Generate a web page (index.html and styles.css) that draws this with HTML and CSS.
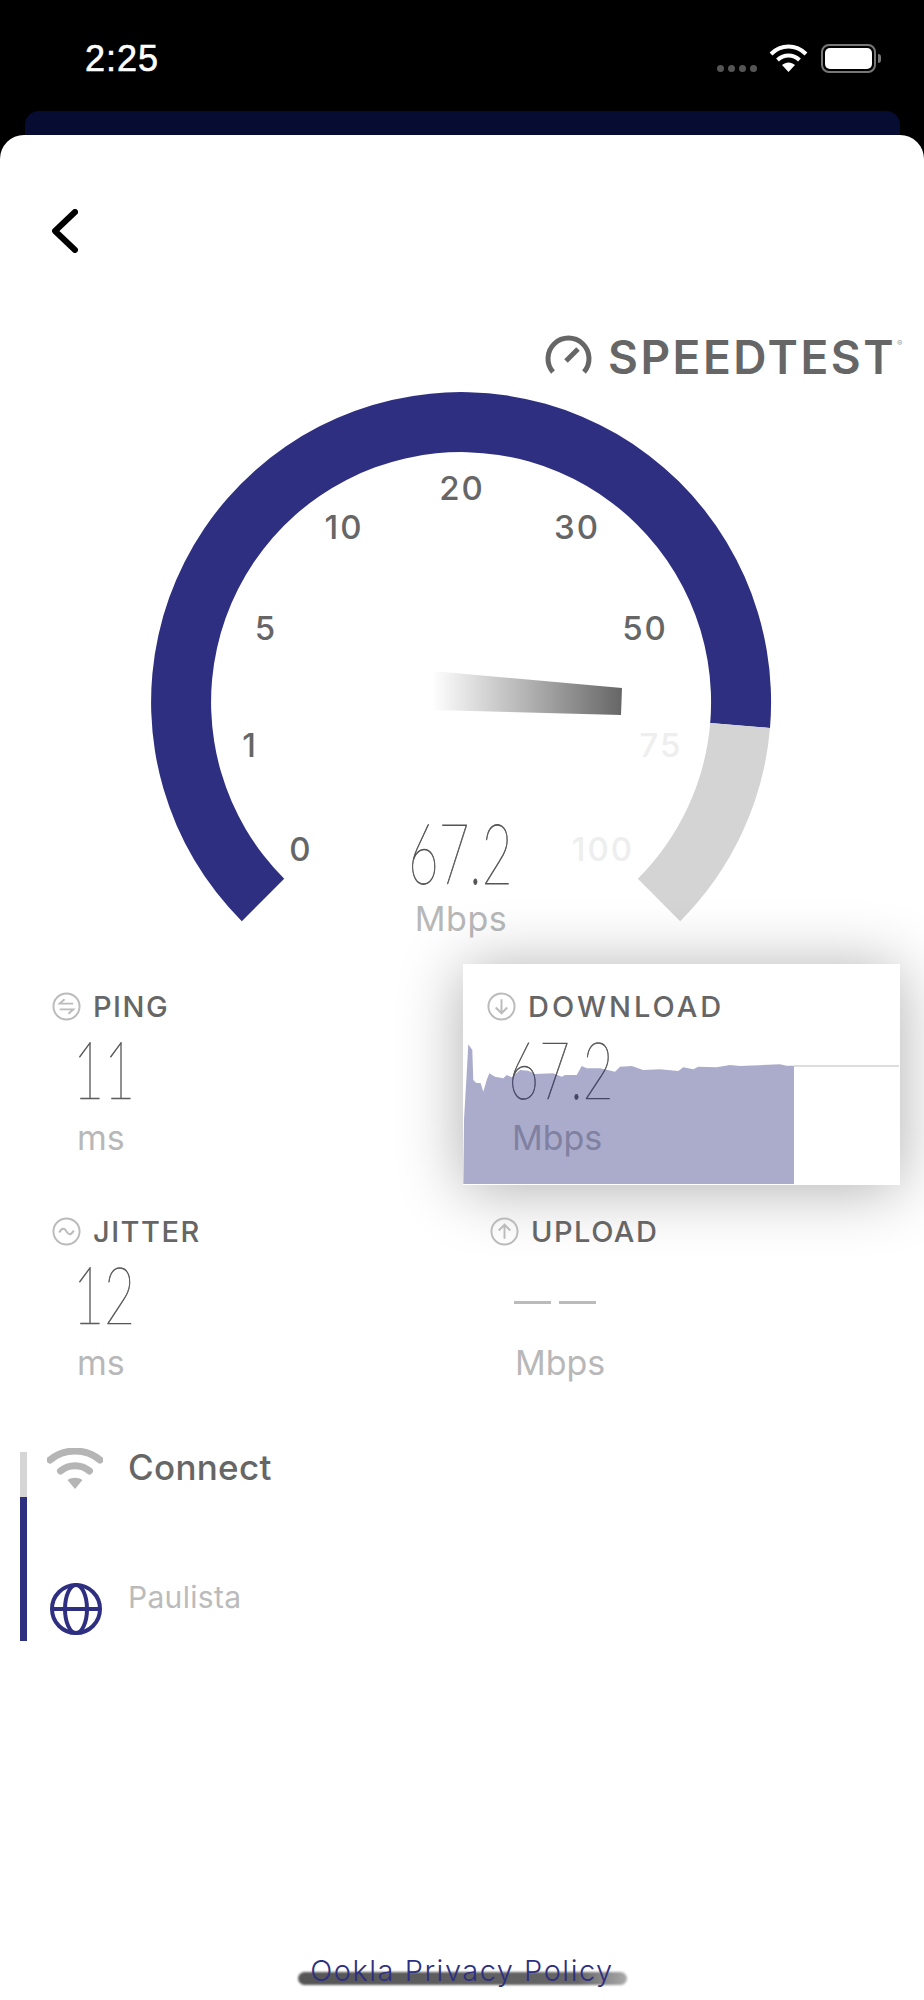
FILE: index.html
```html
<!DOCTYPE html>
<html lang="en">
<head>
  <meta charset="UTF-8">
  <meta name="viewport" content="width=device-width, initial-scale=1.0">
  <title>Speedtest</title>
  <link rel="stylesheet" href="styles.css">
</head>
<body>
  <div class="status-bar">
    <span class="clock">2:25</span>
    <div class="status-icons">
      <div class="signal"><i></i><i></i><i></i><i></i></div>
      <svg class="status-wifi" viewBox="0 0 39 28">
        <path d="M2 10 C12 0 27 0 37 10" />
        <path d="M8.500 16 C15 10 24 10 30.500 16" />
        <path class="wedge" d="M13 21 C17 17.500 22 17.500 26 21 L19.500 28 Z" />
      </svg>
      <div class="battery"><div class="battery-level"></div></div>
    </div>
  </div>
  <div class="peek-card"></div>

  <main class="sheet">
    <svg class="back" viewBox="0 0 26 44"><path d="M23 3 L3 22 L23 41" /></svg>

    <div class="logo">
      <svg class="logo-icon" viewBox="0 0 47 40">
        <path d="M8 38 A20.500 20.500 0 1 1 39 38" />
        <path d="M21 27 L33 15" />
      </svg>
      <span class="logo-text">SPEEDTEST</span><span class="logo-mark">®</span>
    </div>

    <svg class="gauge" viewBox="0 390 924 570">
      <defs>
        <linearGradient id="needleFade" x1="0" x2="1" y1="0" y2="0">
          <stop offset="0" stop-color="#fff" />
          <stop offset="1" stop-color="#666" />
        </linearGradient>
      </defs>
      <path class="arc-done" d="M241.800 921.200 A310 310 0 1 1 770 728 L710.200 723 A250 250 0 1 0 284.200 878.800 Z" />
      <path class="arc-rest" d="M770 728 A310 310 0 0 1 680.200 921.200 L637.800 878.800 A250 250 0 0 0 710.200 723 Z" />
      <polygon points="432,671 622,688 621,715 432,710" fill="url(#needleFade)" />
      <text class="tick" x="301" y="861">0</text>
      <text class="tick" x="250" y="757">1</text>
      <text class="tick" x="266" y="640">5</text>
      <text class="tick" x="344" y="539">10</text>
      <text class="tick" x="462" y="500">20</text>
      <text class="tick" x="577" y="539">30</text>
      <text class="tick" x="645" y="640">50</text>
      <text class="tick tick-off" x="661" y="757">75</text>
      <text class="tick tick-off" x="603" y="861">100</text>
      <text class="gauge-value" transform="translate(408 884) scale(0.63 1)">67.2</text>
      <text class="gauge-unit" x="461" y="931">Mbps</text>
    </svg>

    <section class="metrics">
      <div class="metric">
        <div class="metric-label">
          <svg class="metric-icon" viewBox="0 0 30 30">
            <circle cx="15" cy="15" r="13.500" />
            <path d="M22 12 H8 L13 7.500 M8 18 H22 L17 22.500" />
          </svg>
          PING
        </div>
        <div class="metric-value"><span>11</span></div>
        <div class="metric-unit">ms</div>
      </div>

      <div class="metric metric-active">
        <div class="metric-label">
          <svg class="metric-icon" viewBox="0 0 30 30">
            <circle cx="15" cy="15" r="13.500" />
            <path d="M15 7.500 V22 M9 16 L15 22 L21 16" />
          </svg>
          DOWNLOAD
        </div>
        <div class="metric-value"><span>67.2</span></div>
        <div class="metric-unit">Mbps</div>
        <svg class="chart" viewBox="0 0 436 220">
          <path class="chart-line" d="M331 102 H436" />
          <path class="chart-fill" d="M0.300 220 L1 156 L3.700 109.300 L5.300 80.300 L9.300 86 L10.300 116 L13 118.700 L17.700 119.300 L20.300 127.700 L23.700 116 L26.300 109.300 L32 112.700 L40.300 114.300 L43.700 111 L48.700 113.300 L57 106 L65.300 106.700 L72 110 L90.300 109.300 L98.700 112.700 L102 111 L113.700 111 L118.700 102 L123.700 104.300 L137 104.300 L152 107.700 L157 102.700 L168.700 102 L180.300 106 L197 105.300 L215.300 107 L220.300 103.300 L230.300 105.300 L235.300 102.700 L253.700 103.300 L267 101 L277 102 L317 100.300 L323.700 101.700 L331 101.700 L331 220 Z" />
        </svg>
      </div>

      <div class="metric">
        <div class="metric-label">
          <svg class="metric-icon" viewBox="0 0 30 30">
            <circle cx="15" cy="15" r="13.500" />
            <path d="M7.500 16 C10 11 13 11 15 15 C17 19 20 19 22.500 14" />
          </svg>
          JITTER
        </div>
        <div class="metric-value"><span>12</span></div>
        <div class="metric-unit">ms</div>
      </div>

      <div class="metric metric-upload">
        <div class="metric-label">
          <svg class="metric-icon" viewBox="0 0 30 30">
            <circle cx="15" cy="15" r="13.500" />
            <path d="M15 22.500 V8 M9 14 L15 8 L21 14" />
          </svg>
          UPLOAD
        </div>
        <div class="metric-dashes"><i></i><i></i></div>
        <div class="metric-unit">Mbps</div>
      </div>
    </section>

    <section class="connection">
      <div class="connection-bar"></div>
      <div class="connection-rows">
        <div class="connection-row">
          <svg class="conn-wifi" viewBox="0 0 56 41">
            <path d="M3 12 C17 0 39 0 53 12" />
            <path d="M13.500 23 C22 16 34 16 42.500 23" />
            <path class="wedge" d="M20.500 32 C25 29 31 29 35.500 32 L28 41 Z" />
          </svg>
          <span class="conn-title">Connect</span>
        </div>
        <div class="connection-row connection-server">
          <svg class="globe" viewBox="0 0 52 52">
            <circle cx="26" cy="26" r="24" />
            <ellipse cx="26" cy="26" rx="11" ry="24" />
            <path d="M2 26 H50" />
          </svg>
          <span class="conn-server">Paulista</span>
        </div>
      </div>
    </section>

    <footer class="sheet-footer">
      <div class="home-bar"></div>
      <a class="privacy" href="#">Ookla Privacy Policy</a>
    </footer>
  </main>
</body>
</html>
```

FILE: styles.css
```css
body {
  font-family: Inter, "Noto Sans", sans-serif;
  margin: 0;
  padding: 0;
  background-color: #000;
  color: #666;
  height: 2000px;
  overflow: hidden;
}

.status-bar {
  height: 111px;
  display: flex;
  justify-content: space-between;
  box-sizing: border-box;
  padding: 44px 48px 0 85px;
}

.clock {
  font-family: "Liberation Sans", sans-serif;
  font-size: 36px;
  line-height: 30px;
  letter-spacing: 1px;
  color: #fff;
  -webkit-text-stroke: 0.6px #fff;
}

.status-icons {
  display: flex;
  align-items: flex-start;
  gap: 12px;
}

.signal {
  display: flex;
  gap: 4px;
  margin-top: 21px;
}

.signal i {
  width: 7px;
  height: 7px;
  border-radius: 50%;
  background-color: #555;
}

.status-wifi {
  width: 39px;
  height: 28px;
  fill: none;
  stroke: #fff;
  stroke-width: 4;
}

.wedge {
  fill: currentColor;
  stroke: none;
}

.status-wifi .wedge {
  fill: #fff;
}

.battery {
  width: 55px;
  height: 29px;
  margin-left: 1px;
  box-sizing: border-box;
  border: 2px solid #777;
  border-radius: 8px;
  padding: 2px;
  position: relative;
}

.battery::after {
  content: "";
  position: absolute;
  right: -7px;
  top: 8px;
  width: 3px;
  height: 9px;
  border-radius: 0 3px 3px 0;
  background-color: #777;
}

.battery-level {
  height: 100%;
  border-radius: 5px;
  background-color: #fff;
}

.peek-card {
  height: 24px;
  margin: 0 24px 0 25px;
  border-radius: 14px 14px 0 0;
  background-color: #070c33;
}

.sheet {
  height: 1865px;
  border-radius: 24px 24px 0 0;
  background-color: #fff;
  position: relative;
  overflow: hidden;
}

.back {
  display: block;
  width: 26px;
  height: 44px;
  margin: 74px 0 0 52px;
  fill: none;
  stroke: #000;
  stroke-width: 6;
  stroke-linecap: round;
  stroke-linejoin: round;
}

.logo {
  display: flex;
  align-items: flex-start;
  margin: 81px 0 0 545px;
}

.logo-icon {
  width: 47px;
  height: 40px;
  margin-right: 16px;
  fill: none;
  stroke: #666;
  stroke-width: 5;
}

.logo-text {
  font-size: 46px;
  font-weight: 600;
  line-height: 46px;
  letter-spacing: 2.5px;
}

.logo-mark {
  font-size: 8px;
  color: #999;
  margin: 4px 0 0 1px;
}

.gauge {
  display: block;
  width: 924px;
  height: 570px;
  margin-top: 10px;
}

.arc-done {
  fill: #2e2f80;
}

.arc-rest {
  fill: #d4d4d4;
}

.tick {
  font-size: 33px;
  font-weight: 500;
  letter-spacing: 2px;
  fill: #666;
  text-anchor: middle;
}

.tick-off {
  fill: #eee;
}

.gauge-value {
  font-family: Lato, sans-serif;
  font-size: 84px;
  font-weight: 100;
  fill: #555;
  stroke: #555;
  stroke-width: 0.8px;
}

.gauge-unit {
  font-size: 34px;
  letter-spacing: 0.5px;
  fill: #b8b8b8;
  text-anchor: middle;
}

.metrics {
  display: grid;
  grid-template-columns: 463px 437px;
  grid-template-rows: 225px 225px;
  margin-top: 4px;
}

.metric {
  box-sizing: border-box;
  padding: 27px 0 0 52px;
  position: relative;
}

.metric-active {
  height: 221px;
  padding-left: 24px;
  background-color: #fff;
  box-shadow: 0 4px 60px rgba(0, 0, 0, 0.32);
}

.metric-upload {
  padding-left: 27px;
}

.metric-label {
  display: flex;
  align-items: center;
  gap: 12px;
  height: 30px;
  font-size: 29px;
  font-weight: 500;
  letter-spacing: 1.5px;
}

.metric-active .metric-label {
  letter-spacing: 3px;
}

.metric-icon {
  width: 29px;
  height: 29px;
  fill: none;
  stroke: #bbb;
  stroke-width: 2;
}

.metric-value {
  height: 66px;
  margin: 14px 0 0 21px;
  font-family: Lato, sans-serif;
  font-size: 80px;
  font-weight: 100;
  line-height: 66px;
  color: #555;
  -webkit-text-stroke: 0.7px #555;
}

.metric-value span {
  display: inline-block;
  transform: scaleX(0.67);
  transform-origin: left;
}

.metric-unit {
  margin: 19px 0 0 25px;
  font-size: 34px;
  line-height: 36px;
  color: #b8b8b8;
}

.metric-dashes {
  box-sizing: border-box;
  height: 66px;
  margin: 14px 0 0 24px;
  padding-bottom: 22px;
  display: flex;
  align-items: flex-end;
  gap: 8px;
}

.metric-dashes i {
  width: 37px;
  height: 3px;
  background-color: #bbb;
}

.chart {
  position: absolute;
  left: 0;
  top: 0;
  width: 436px;
  height: 220px;
}

.chart-line {
  stroke: #ddd;
  stroke-width: 2;
}

.chart-fill {
  fill: rgba(46, 47, 128, 0.4);
}

.connection {
  display: flex;
  margin: 38px 0 0 20px;
}

.connection-bar {
  width: 7px;
  height: 189px;
  background: linear-gradient(#d5d5d5 45px, #2e2f80 45px);
}

.connection-rows {
  flex: 1;
}

.connection-row {
  display: flex;
  align-items: flex-start;
  height: 131px;
}

.conn-wifi {
  width: 56px;
  height: 41px;
  margin: -4px 25px 0 20px;
  fill: none;
  color: #b5b5b5;
  stroke: #b5b5b5;
  stroke-width: 7;
  stroke-linecap: round;
}

.conn-title {
  margin-top: -2px;
  font-size: 35px;
  font-weight: 500;
  line-height: 34px;
  letter-spacing: 0.3px;
}

.connection-server {
  height: 58px;
}

.globe {
  width: 52px;
  height: 52px;
  margin: 0 26px 0 23px;
  fill: none;
  stroke: #2e2f80;
  stroke-width: 4;
}

.conn-server {
  margin-top: -1px;
  font-size: 30px;
  line-height: 30px;
  letter-spacing: 0.3px;
  color: #bbb;
}

.sheet-footer {
  position: absolute;
  left: 0;
  right: 0;
  bottom: 0;
  height: 45px;
  display: flex;
  justify-content: center;
}

.home-bar {
  position: absolute;
  left: 298px;
  top: 17px;
  width: 329px;
  height: 13px;
  border-radius: 7px;
  background: linear-gradient(90deg, #555, #666 85%, #aaa);
  filter: blur(1px);
}

.privacy {
  position: relative;
  font-size: 29px;
  font-weight: 300;
  line-height: 32px;
  letter-spacing: 1.5px;
  color: #2e2f80;
  text-decoration: none;
}
```
